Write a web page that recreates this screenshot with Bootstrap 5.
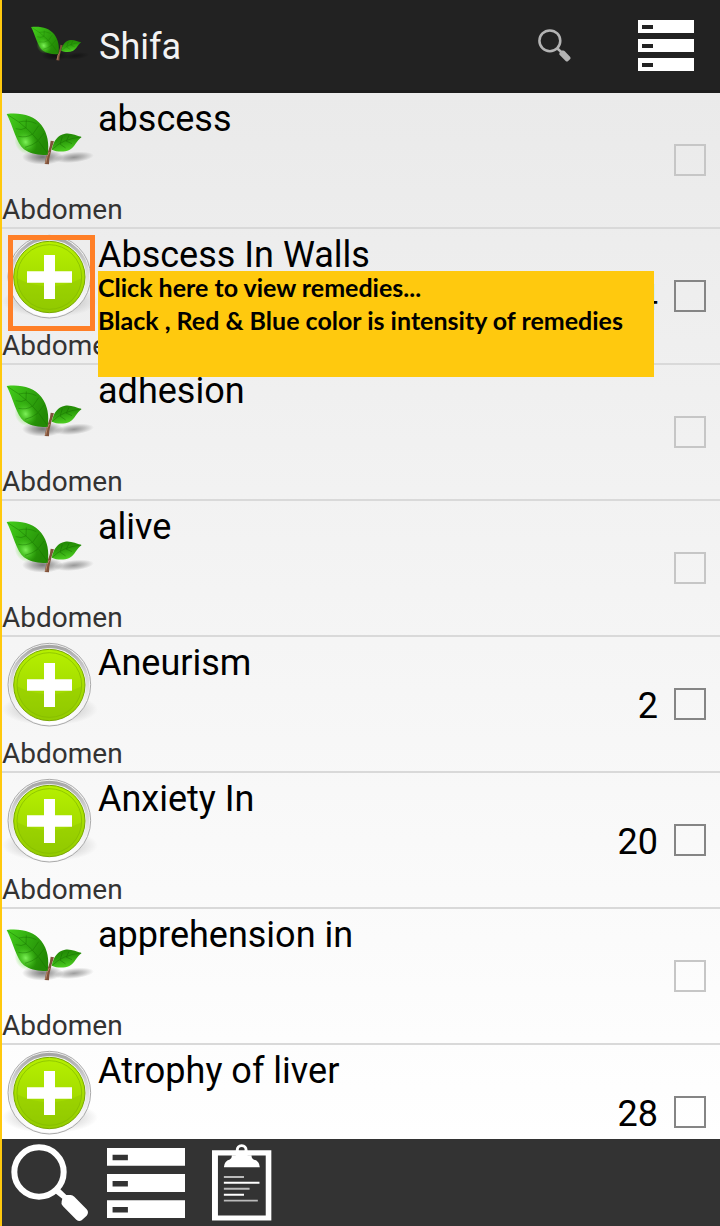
<!DOCTYPE html>
<html lang="en">
<head>
<meta charset="utf-8">
<meta name="viewport" content="width=device-width, initial-scale=1">
<title>Shifa</title>
<link href="https://cdn.jsdelivr.net/npm/bootstrap@5.3.0/dist/css/bootstrap.min.css" rel="stylesheet">
<style>
  body { font-family: Roboto, "Liberation Sans", sans-serif; color: #000; }
  .app { border-left: 2px solid #ffc90e; }
  .topbar { height: 93px; background: #222; border-bottom: 3px solid #1b1b1b; padding: 0 26px; }
  .app-name { font-size: 36px; line-height: 42px; color: #f3f3f3; font-weight: 400; margin-left: 7px; padding-top: 4px; }
  .icon-btn { background: none; border: 0; padding: 0; display: block; }
  .icon-btn svg, .entry svg, .topbar svg { display: block; }
  .find-top { color: #b4b4b4; }
  .list-top { margin-left: 67px; }
  .symptoms { min-height: 0; background: linear-gradient(#eaeaea, #fff); }
  .entry { display: grid; grid-template-columns: 96px 1fr auto; grid-template-rows: 96px 38px; border-bottom: 2px solid #d9d9d9; }
  .entry-name { font-size: 36px; line-height: 42px; padding-top: 5px; }
  .entry-part { grid-column: 1 / 3; grid-row: 2; font-size: 28px; line-height: 42px; height: 38px; color: #333; }
  .entry-pick { grid-column: 3; grid-row: 1 / 3; padding-right: 14px; gap: 16px; }
  .entry-count { font-size: 36px; line-height: 42px; padding-top: 4px; }
  .form-check-input.pick { width: 32px; height: 32px; margin: 0; border-radius: 0; border: 2px solid #858585; background-color: transparent; }
  .form-check-input.pick:disabled { border-color: #c6c6c6; opacity: 1; }
  .spot { left: 6px; top: 6px; width: 87px; height: 96px; border: 5px solid #ff7f27; }
  .tip { left: 96px; right: 66px; top: 42px; height: 106px; background: #ffc90e; z-index: 2; font: 700 25px/33px Lato, "Open Sans", sans-serif; white-space: nowrap; }
  .bottombar { height: 87px; background: #333; padding: 0 8px; }
  .list-bottom { margin-left: 17px; }
  .notes-bottom { margin-left: 27px; }
</style>
</head>
<body>
<svg width="0" height="0" class="position-absolute" aria-hidden="true">
  <defs>
    <linearGradient id="leafA" x1="0" y1="0" x2="1" y2="0.5"><stop offset="0" stop-color="#45d01c"/><stop offset=".5" stop-color="#32ab10"/><stop offset="1" stop-color="#238a05"/></linearGradient>
    <radialGradient id="leafGlow"><stop offset="0" stop-color="#8dff68"/><stop offset="1" stop-color="#4ad41c" stop-opacity="0"/></radialGradient>
    <linearGradient id="leafB" x1="0" y1="0" x2=".3" y2="1"><stop offset="0" stop-color="#1f8003"/><stop offset=".5" stop-color="#2a9b0a"/><stop offset="1" stop-color="#4ccc20"/></linearGradient>
    <linearGradient id="ring" x1="0" y1="0" x2="0" y2="1"><stop offset="0" stop-color="#a5a5a5"/><stop offset=".35" stop-color="#d4d4d4"/><stop offset=".75" stop-color="#f4f4f4"/><stop offset="1" stop-color="#fff"/></linearGradient>
    <linearGradient id="lime" x1="0" y1="0" x2="0" y2="1"><stop offset="0" stop-color="#b6f000"/><stop offset=".5" stop-color="#a6de00"/><stop offset="1" stop-color="#93cc00"/></linearGradient>
    <radialGradient id="shade"><stop offset="0" stop-color="#000" stop-opacity=".5"/><stop offset=".5" stop-color="#000" stop-opacity=".28"/><stop offset="1" stop-color="#000" stop-opacity="0"/></radialGradient>
    <symbol id="leaf" viewBox="6 9 288 288">
      <ellipse cx="128" cy="201" rx="62" ry="23" fill="url(#shade)"/>
      <ellipse cx="222" cy="202" rx="60" ry="16" transform="rotate(-6 222 202)" fill="url(#shade)" opacity=".75"/>
      <path d="M134 222L147 223Q146 207 151 192Q154 177 162 154L152 152Q151 168 144 185Q137 203 134 222Z" fill="#80523a"/>
      <path d="M137 220Q140 196 148 186" stroke="#b98a6c" stroke-width="3" fill="none"/>
      <path d="M20 72C62 67 102 76 124 105C143 130 148 161 143 194C119 197 91 192 72 178C49 159 40 111 20 72Z" fill="url(#leafA)"/>
      <ellipse cx="77" cy="156" rx="32" ry="38" transform="rotate(-30 77 156)" fill="url(#leafGlow)" opacity=".85"/>
      <path d="M23 74Q95 115 142 190M57 96Q85 89 109 101M78 114L79 88M98 133L116 107M115 151L133 128M77 114Q65 122 47 116M96 133Q80 144 55 139M114 153Q97 167 75 172" stroke="#157000" stroke-opacity=".65" stroke-width="2" fill="none"/>
      <path d="M155 179C161 152 173 135 195 131C213 128 229 137 245 141C230 151 225 171 208 180C190 188 169 185 155 179Z" fill="url(#leafB)"/>
      <path d="M157 178Q187 147 243 141M181 160L187 140M200 151L207 136M180 162L197 174M198 153L216 161" stroke="#126300" stroke-opacity=".6" stroke-width="2" fill="none"/>
    </symbol>
    <symbol id="plus" viewBox="6 3 288 288">
      <ellipse cx="150" cy="220" rx="144" ry="48" fill="url(#shade)" opacity=".55"/>
      <circle cx="148" cy="146" r="124" fill="#f4f4f4" stroke="#aaa" stroke-width="3"/>
      <circle cx="148" cy="146" r="115" fill="none" stroke="url(#ring)" stroke-width="10"/>
      <circle cx="148" cy="147" r="107" fill="url(#lime)" stroke="#79a800" stroke-width="3"/>
      <circle cx="148" cy="147" r="97" fill="none" stroke="#7eb400" stroke-width="3" opacity=".65"/>
      <path d="M51 151A97 97 0 0 0 245 151Q198 175 148 175T51 151Z" fill="#8bc400" opacity=".35"/>
      <path d="M132 81H165V130H216V164H165V213H132V164H81V130H132Z" fill="#fff"/>
    </symbol>
    <symbol id="lens" viewBox="0 0 232 234">
      <circle cx="83" cy="84" r="74" fill="none" stroke="currentColor" stroke-width="18"/>
      <path d="M130 146L143 132L165 153L178 153Q184 153 189 158L226 196Q234 205 226 215L211 229Q203 234 195 227L155 187Q148 180 151 172L153 164Z" fill="currentColor"/>
    </symbol>
    <symbol id="bars" viewBox="0 0 56 51" preserveAspectRatio="none">
      <path fill="currentColor" fill-rule="evenodd" d="M0 0H56V13H0ZM4 5V9H15V5ZM0 19H56V32H0ZM4 24V28H15V24ZM0 38H56V51H0ZM4 43V47H15V43Z"/>
    </symbol>
    <symbol id="clip" viewBox="636 42 182 232">
      <path fill="#fff" fill-rule="evenodd" d="M636 60H816V273H636ZM654 76V258H799V76Z"/>
      <path fill="#fff" fill-rule="evenodd" d="M672 112Q673 92 690 88Q697 85 696 75H708V60Q709 43 726 42Q743 43 744 60V75H756Q755 85 762 88Q780 92 781 112ZM726 50A9 9 0 1 0 726 68A9 9 0 1 0 726 50Z"/>
      <path stroke="#bbb" stroke-width="6" d="M672 141H733M672 177H750M672 213H775"/>
      <path stroke="#fff" stroke-width="6" d="M672 159H780M672 195H733"/>
    </symbol>
  </defs>
</svg>

<div class="app vh-100 d-flex flex-column overflow-hidden">
  <header class="topbar d-flex align-items-center flex-shrink-0">
    <svg width="64" height="64" aria-hidden="true"><use href="#leaf"/></svg>
    <h1 class="app-name mb-0">Shifa</h1>
    <button type="button" class="icon-btn find-top ms-auto" aria-label="Search"><svg width="33" height="33"><use href="#lens"/></svg></button>
    <button type="button" class="icon-btn list-top text-white" aria-label="List"><svg width="56" height="51"><use href="#bars"/></svg></button>
  </header>

  <main class="symptoms flex-grow-1 overflow-hidden">
    <div class="entry">
      <svg width="96" height="96"><use href="#leaf"/></svg>
      <label class="entry-name" for="s1">abscess</label>
      <div class="entry-part">Abdomen</div>
      <div class="entry-pick d-flex align-items-center"><input class="form-check-input pick" type="checkbox" id="s1" disabled></div>
    </div>
    <div class="entry position-relative">
      <svg width="96" height="96"><use href="#plus"/></svg>
      <label class="entry-name" for="s2">Abscess In Walls</label>
      <div class="entry-part">Abdomen</div>
      <div class="entry-pick d-flex align-items-center"><span class="entry-count">4</span><input class="form-check-input pick" type="checkbox" id="s2"></div>
      <div class="spot position-absolute"></div>
      <div class="tip position-absolute" role="tooltip">Click here to view remedies...<br>Black , Red &amp; Blue color is intensity of remedies</div>
    </div>
    <div class="entry">
      <svg width="96" height="96"><use href="#leaf"/></svg>
      <label class="entry-name" for="s3">adhesion</label>
      <div class="entry-part">Abdomen</div>
      <div class="entry-pick d-flex align-items-center"><input class="form-check-input pick" type="checkbox" id="s3" disabled></div>
    </div>
    <div class="entry">
      <svg width="96" height="96"><use href="#leaf"/></svg>
      <label class="entry-name" for="s4">alive</label>
      <div class="entry-part">Abdomen</div>
      <div class="entry-pick d-flex align-items-center"><input class="form-check-input pick" type="checkbox" id="s4" disabled></div>
    </div>
    <div class="entry">
      <svg width="96" height="96"><use href="#plus"/></svg>
      <label class="entry-name" for="s5">Aneurism</label>
      <div class="entry-part">Abdomen</div>
      <div class="entry-pick d-flex align-items-center"><span class="entry-count">2</span><input class="form-check-input pick" type="checkbox" id="s5"></div>
    </div>
    <div class="entry">
      <svg width="96" height="96"><use href="#plus"/></svg>
      <label class="entry-name" for="s6">Anxiety In</label>
      <div class="entry-part">Abdomen</div>
      <div class="entry-pick d-flex align-items-center"><span class="entry-count">20</span><input class="form-check-input pick" type="checkbox" id="s6"></div>
    </div>
    <div class="entry">
      <svg width="96" height="96"><use href="#leaf"/></svg>
      <label class="entry-name" for="s7">apprehension in</label>
      <div class="entry-part">Abdomen</div>
      <div class="entry-pick d-flex align-items-center"><input class="form-check-input pick" type="checkbox" id="s7" disabled></div>
    </div>
    <div class="entry">
      <svg width="96" height="96"><use href="#plus"/></svg>
      <label class="entry-name" for="s8">Atrophy of liver</label>
      <div class="entry-part"></div>
      <div class="entry-pick d-flex align-items-center"><span class="entry-count">28</span><input class="form-check-input pick" type="checkbox" id="s8"></div>
    </div>
  </main>

  <footer class="bottombar d-flex align-items-center flex-shrink-0 text-white">
    <button type="button" class="icon-btn text-white" aria-label="Search"><svg width="80" height="78"><use href="#lens"/></svg></button>
    <button type="button" class="icon-btn list-bottom text-white" aria-label="List"><svg width="78" height="70"><use href="#bars"/></svg></button>
    <button type="button" class="icon-btn notes-bottom" aria-label="Notes"><svg width="60" height="77"><use href="#clip"/></svg></button>
  </footer>
</div>
<script src="https://cdn.jsdelivr.net/npm/bootstrap@5.3.0/dist/js/bootstrap.bundle.min.js"></script>
</body>
</html>
